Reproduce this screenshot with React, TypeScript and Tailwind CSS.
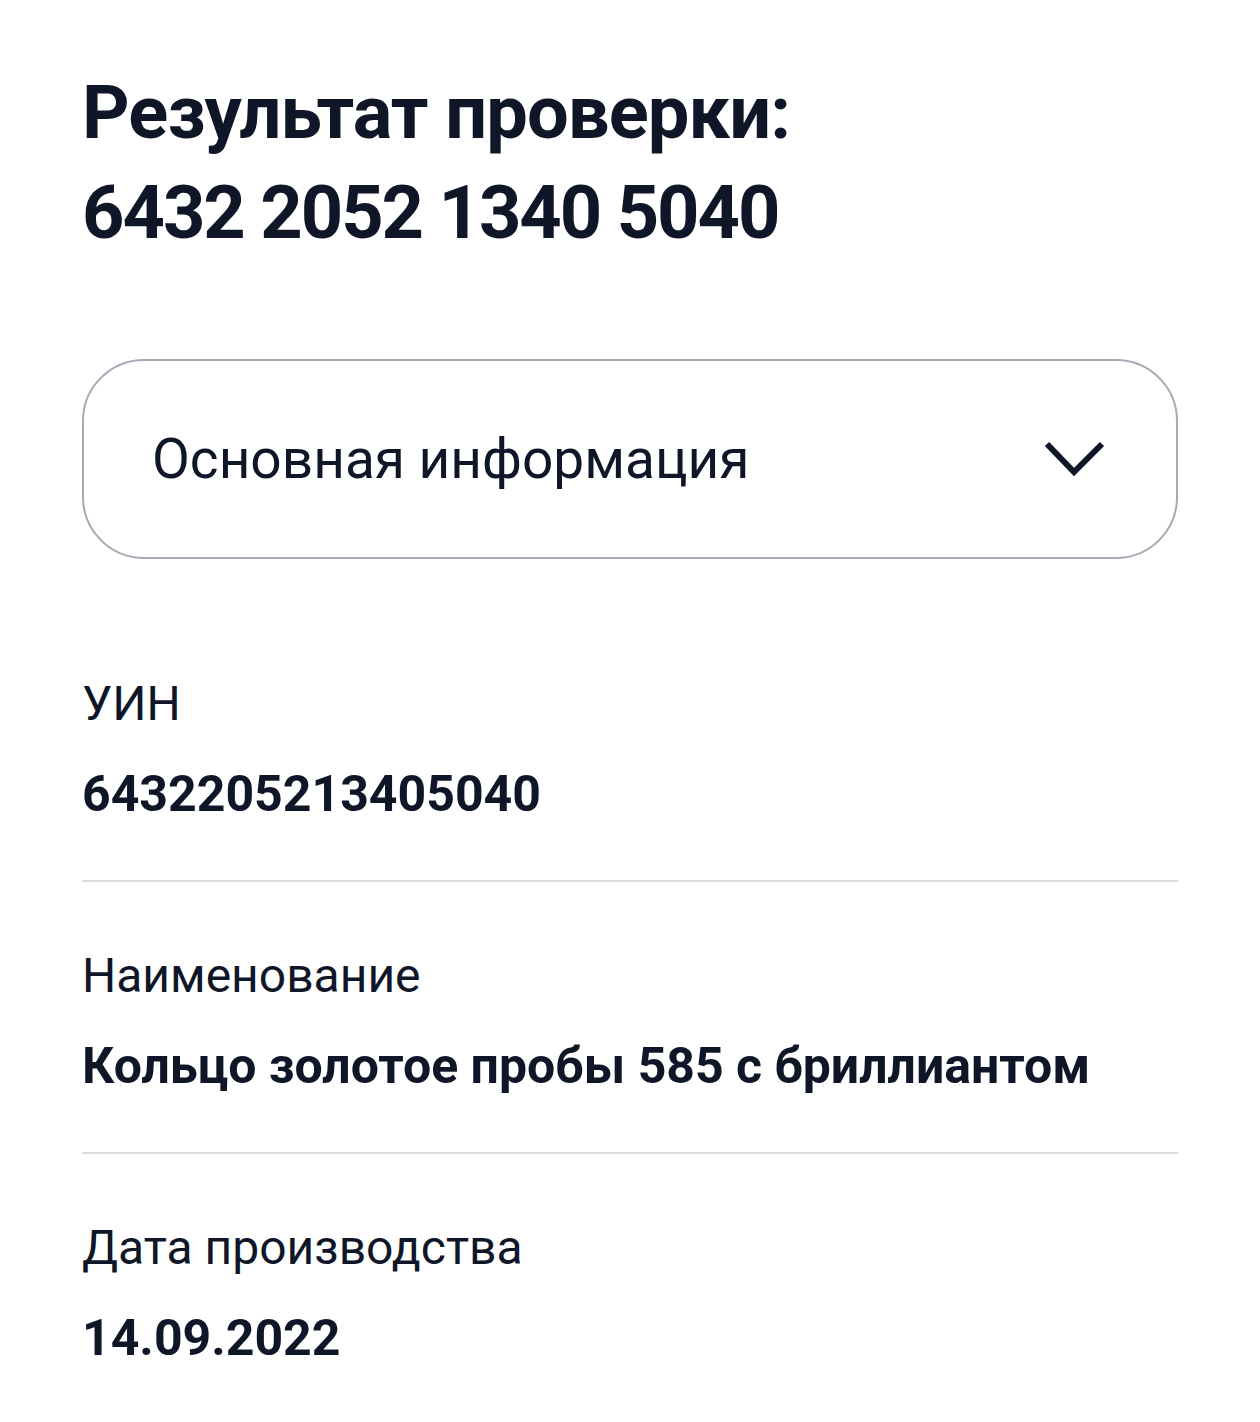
const rows = [
    { label: 'УИН', value: '6432205213405040' },
    { label: 'Наименование', value: 'Кольцо золотое пробы 585 с бриллиантом' },
    { label: 'Дата производства', value: '14.09.2022' },
];

const Chevron = () => (
    <svg width="66" height="42" viewBox="0 0 66 42" fill="none" className="text-[#0e1628]">
        <polyline points="5,6 32,34 60,6" stroke="currentColor" strokeWidth="6" strokeLinejoin="miter" />
    </svg>
);

export default function App() {
    return (
        <div className="min-h-[1422px] bg-white px-[82px] pt-[63px] text-[#0e1628]" style={{ fontFamily: 'Roboto, "Noto Sans", sans-serif' }}>
            <h1 className="text-[74px] font-bold leading-[100px]">
                <span className="block tracking-[-0.9px]">Результат проверки:</span>
                <span className="block tracking-[-2px]">6432 2052 1340 5040</span>
            </h1>

            <button className="mt-[96px] flex h-[200px] w-full items-center justify-between rounded-[62px] border-2 border-[#a3abb7] pl-[68px] pr-[68px]">
                <span className="text-[55px] font-normal">Основная информация</span>
                <Chevron />
            </button>

            <div className="mt-[115px]">
                {rows.map((row, i) => (
                    <div key={row.label}>
                        <div className="text-[48px] leading-[60px]">{row.label}</div>
                        <div className="mt-[30px] text-[50px] font-bold leading-[60px]">{row.value}</div>
                        {i < rows.length - 1 && <div className="mb-[64px] mt-[56px] h-[2px] bg-[#dadada]" />}
                    </div>
                ))}
            </div>
        </div>
    );
}
